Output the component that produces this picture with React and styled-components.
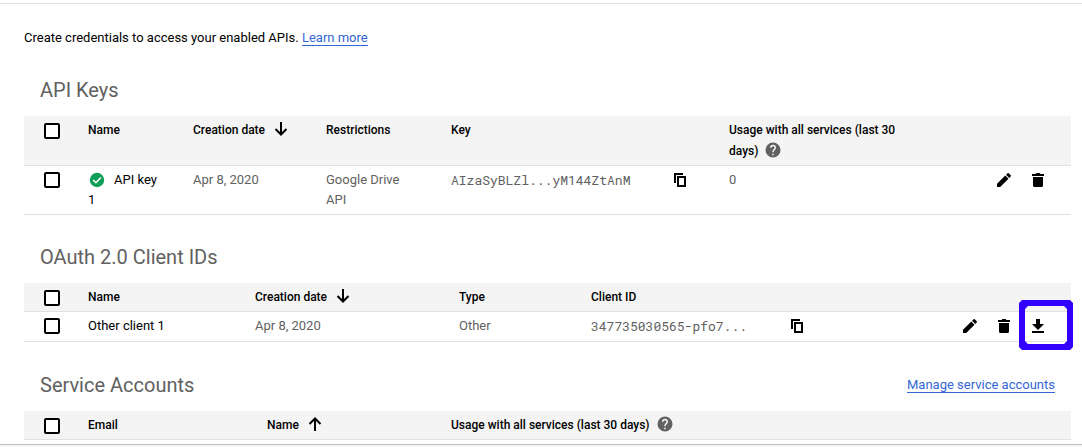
import React from "react";
import styled, { createGlobalStyle } from "styled-components";

const GlobalStyle = createGlobalStyle`
  * { box-sizing: border-box; }
  body {
    margin: 0;
    background: #fff;
    color: #000;
    font: 13px/20px Roboto, "Liberation Sans", sans-serif;
  }
`;

const Page = styled.div`
  margin-top: 3px;
  border-top: 1px solid #e0e0e0;
`;

const Main = styled.main`
  padding: 24px 11px 4px 24px;
`;

const Intro = styled.p`
  margin: 0;
`;

const Link = styled.a`
  color: #3367d6;
  text-decoration: none;
  border-bottom: 1px solid #3367d6;
`;

const SectionHead = styled.header`
  display: flex;
  align-items: center;
  justify-content: space-between;
  height: ${(p) => p.$height}px;
  padding: 16px 16px 0;
`;

const Title = styled.h2`
  margin: 0;
  font-size: 20px;
  font-weight: 400;
  line-height: 24px;
  color: #616161;
`;

const Table = styled.table`
  width: 100%;
  table-layout: fixed;
  border-collapse: separate;
  border-spacing: 0;
`;

const Th = styled.th`
  padding: 4px 16px 3px 0;
  background: #f4f4f4;
  border-bottom: 1px solid #e0e0e0;
  font-size: 12px;
  font-weight: 500;
  line-height: 21px;
  text-align: left;
  vertical-align: top;
`;

const Td = styled.td`
  padding: 4px 32px 4px 0;
  border-bottom: 1px solid #e0e0e0;
  color: ${(p) => (p.$strong ? "#000" : "#616161")};
  text-align: left;
  vertical-align: top;
`;

const CheckTh = styled(Th)`
  padding-left: 20px;
  padding-right: 0;
`;

const CheckTd = styled(Td)`
  padding-left: 20px;
  padding-right: 0;
`;

const Checkbox = styled.input.attrs({ type: "checkbox" })`
  appearance: none;
  display: block;
  width: 16px;
  height: 16px;
  margin: ${(p) => (p.$head ? 3 : 2)}px 0 0;
  border: 2px solid #000;
  border-radius: 2px;
  background: #fff;
  &:checked { background: #000; }
`;

const Restrictions = styled.div`
  max-width: 90px;
`;

const Svg = styled.svg`
  display: inline-block;
  width: 18px;
  height: 18px;
  vertical-align: -4px;
  margin-left: ${(p) => p.$gap || 0}px;
`;

const StatusSvg = styled(Svg)`
  vertical-align: -5px;
  margin-right: 8px;
`;

const CopyRow = styled.div`
  display: flex;
  justify-content: space-between;
  align-items: flex-start;
  max-width: ${(p) => p.$width}px;
  font-family: "Roboto Mono", "Liberation Mono", monospace;
  line-height: 21px;
`;

const ActionTd = styled(Td)`
  padding-right: 24px;
`;

const Actions = styled.div`
  display: flex;
  justify-content: flex-end;
  gap: 16px;
`;

const IconButton = styled.button`
  display: flex;
  align-items: center;
  justify-content: center;
  flex: none;
  width: 18px;
  height: 20px;
  padding: 0;
  border: 0;
  background: none;
  position: relative;
`;

const HighlightSvg = styled.svg`
  position: absolute;
  top: -16px;
  left: -10px;
  width: 54px;
  height: 50px;
  pointer-events: none;
`;

const Footer = styled.footer`
  height: 3px;
  background: #f7f7f7;
  border-top: 1px solid #bdbdbd;
`;

const CopyIcon = () => (
  <Svg viewBox="0 0 18 18" aria-hidden="true">
    <path d="M3 12V3h8M6 6h7v9H6z" fill="none" stroke="#000" strokeWidth="2" />
  </Svg>
);
const EditIcon = () => (
  <Svg viewBox="0 0 18 18" aria-hidden="true">
    <path d="M2 12.8V16h3.2l8.300-8.300-3.200-3.200zM15.700 5.400a.9.9 0 0 0 0-1.200L13.800 2.300a.9.9 0 0 0-1.200 0L11.100 3.700l3.200 3.200z" />
  </Svg>
);
const DeleteIcon = () => (
  <Svg viewBox="0 0 18 18" aria-hidden="true">
    <path d="M4 6v8.5A1.5 1.5 0 0 0 5.500 16h7a1.500 1.500 0 0 0 1.500-1.500V6zM3 3h3.500l1-1h3l1 1H15v2H3z" />
  </Svg>
);
const DownloadIcon = () => (
  <Svg viewBox="0 0 18 18" aria-hidden="true">
    <path d="M15 7h-4V2H7v5H3l6 6zM3 14v2h12v-2z" />
  </Svg>
);
const Highlight = () => (
  <HighlightSvg viewBox="0 0 54 50" aria-hidden="true">
    <path
      fill="#3300ff"
      fillRule="evenodd"
      d="M3 0H51L54 3V47L51 50H3L0 47V3zM9 6L6 9V41L9 44H45L48 41V9L45 6z"
    />
  </HighlightSvg>
);
const CheckIcon = () => (
  <StatusSvg viewBox="0 0 18 18" role="img" aria-label="Active">
    <circle cx="9" cy="9" r="7.200" fill="#0f9d58" />
    <path d="M5.200 9l2.700 2.700 5-5.200" fill="none" stroke="#fff" strokeWidth="1.600" />
  </StatusSvg>
);
const ArrowIcon = ({ up }) => (
  <Svg viewBox="0 0 18 18" $gap={7} aria-hidden="true">
    <path
      d={up ? "M9 16V3M3.500 9L9 3.500 14.500 9" : "M9 2v13M3.500 9L9 14.500 14.500 9"}
      fill="none" stroke="#000" strokeWidth="2"
    />
  </Svg>
);
const HelpIcon = () => (
  <Svg viewBox="0 0 24 24" $gap={6} role="img" aria-label="Help">
    <path fill="#616161" d="M12 2a10 10 0 1 0 0 20 10 10 0 0 0 0-20zm1 17h-2v-2h2zm2.070-7.750l-.900.920C13.450 12.900 13 13.500 13 15h-2v-.500c0-1.100.450-2.100 1.170-2.830l1.240-1.260c.370-.360.590-.860.590-1.410a2 2 0 0 0-4 0H8a4 4 0 0 1 8 0c0 .880-.360 1.680-.930 2.250z" />
  </Svg>
);

const Columns = ({ widths }) => (
  <colgroup>
    {widths.map((w, i) => (
      <col key={i} width={w} />
    ))}
  </colgroup>
);

export default function App() {
  return (
    <Page>
      <GlobalStyle />
      <Main>
        <Intro>
          Create credentials to access your enabled APIs. <Link href="#learn">Learn more</Link>
        </Intro>

        <SectionHead $height={68}>
          <Title>API Keys</Title>
        </SectionHead>
        <Table>
          <Columns widths={[64, 105, 133, 125, 278, 200, undefined]} />
          <thead>
            <tr>
              <CheckTh><Checkbox $head aria-label="Select all API keys" /></CheckTh>
              <Th>Name</Th>
              <Th>Creation date<ArrowIcon /></Th>
              <Th>Restrictions</Th>
              <Th>Key</Th>
              <Th>Usage with all services (last 30 days)<HelpIcon /></Th>
              <Th />
            </tr>
          </thead>
          <tbody>
            <tr>
              <CheckTd><Checkbox aria-label="Select API key 1" /></CheckTd>
              <Td $strong><CheckIcon />API key 1</Td>
              <Td>Apr 8, 2020</Td>
              <Td><Restrictions>Google Drive API</Restrictions></Td>
              <Td>
                <CopyRow $width={239}>
                  AIzaSyBLZl...yM144ZtAnM
                  <IconButton aria-label="Copy key"><CopyIcon /></IconButton>
                </CopyRow>
              </Td>
              <Td>0</Td>
              <ActionTd>
                <Actions>
                  <IconButton aria-label="Edit"><EditIcon /></IconButton>
                  <IconButton aria-label="Delete"><DeleteIcon /></IconButton>
                </Actions>
              </ActionTd>
            </tr>
          </tbody>
        </Table>

        <SectionHead $height={68}>
          <Title>OAuth 2.0 Client IDs</Title>
        </SectionHead>
        <Table>
          <Columns widths={[64, 167, 204, 132, 278, undefined]} />
          <thead>
            <tr>
              <CheckTh><Checkbox $head aria-label="Select all client IDs" /></CheckTh>
              <Th>Name</Th>
              <Th>Creation date<ArrowIcon /></Th>
              <Th>Type</Th>
              <Th>Client ID</Th>
              <Th />
            </tr>
          </thead>
          <tbody>
            <tr>
              <CheckTd><Checkbox aria-label="Select Other client 1" /></CheckTd>
              <Td $strong>Other client 1</Td>
              <Td>Apr 8, 2020</Td>
              <Td>Other</Td>
              <Td>
                <CopyRow $width={216}>
                  347735030565-pfo7...
                  <IconButton aria-label="Copy client ID"><CopyIcon /></IconButton>
                </CopyRow>
              </Td>
              <ActionTd>
                <Actions>
                  <IconButton aria-label="Edit"><EditIcon /></IconButton>
                  <IconButton aria-label="Delete"><DeleteIcon /></IconButton>
                  <IconButton aria-label="Download"><DownloadIcon /><Highlight /></IconButton>
                </Actions>
              </ActionTd>
            </tr>
          </tbody>
        </Table>

        <SectionHead $height={69}>
          <Title>Service Accounts</Title>
          <span><Link href="#manage">Manage service accounts</Link></span>
        </SectionHead>
        <Table>
          <Columns widths={[64, 179, 184, undefined]} />
          <thead>
            <tr>
              <CheckTh><Checkbox $head aria-label="Select all service accounts" /></CheckTh>
              <Th>Email</Th>
              <Th>Name<ArrowIcon up /></Th>
              <Th>Usage with all services (last 30 days)<HelpIcon /></Th>
            </tr>
          </thead>
        </Table>
      </Main>
      <Footer />
    </Page>
  );
}
